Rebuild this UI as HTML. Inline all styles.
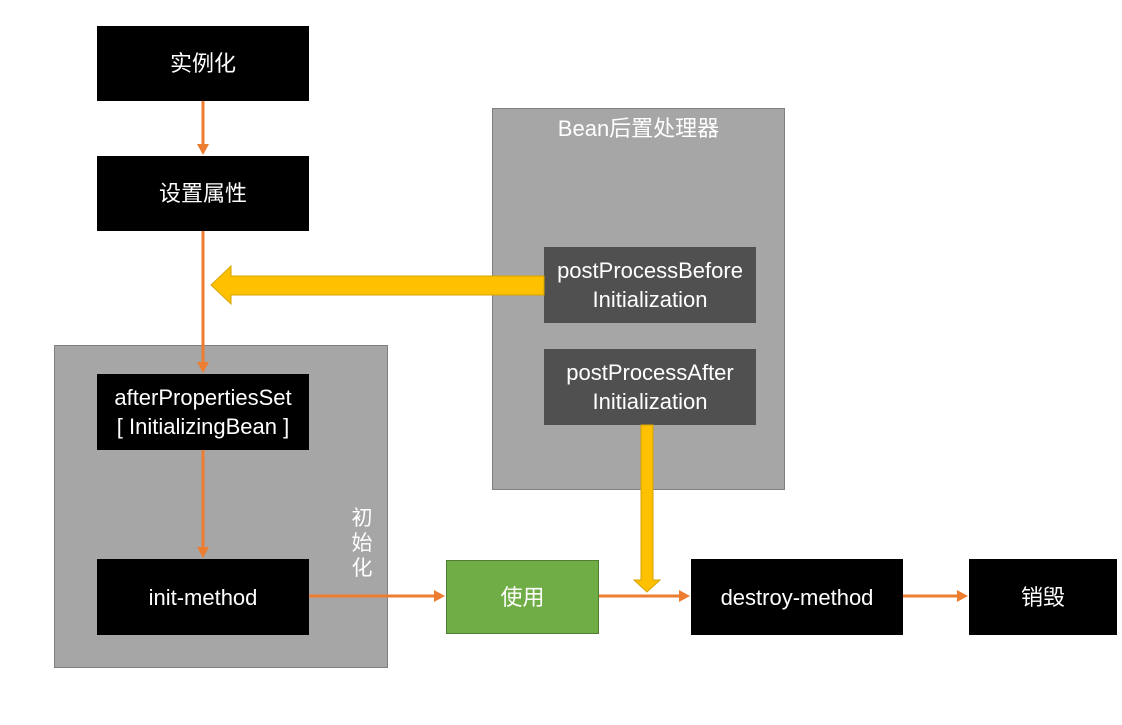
<!DOCTYPE html>
<html><head><meta charset="utf-8"><style>
body{margin:0;width:1122px;height:725px;background:#fff;position:relative;overflow:hidden;font-family:"Liberation Sans","Noto Sans CJK SC",sans-serif;}
.b{position:absolute;display:flex;align-items:center;justify-content:center;text-align:center;color:#fff;font-size:22px;line-height:29px;}
.k{background:#000}
.g{background:#a6a6a6;border:1px solid #7f7f7f;box-sizing:border-box}
.d{background:#505050}
</style></head><body>
<div class="b g" style="left:54px;top:345px;width:334px;height:323px"></div>
<div class="b g" style="left:492px;top:108px;width:293px;height:382px;align-items:flex-start;padding-top:5px">Bean后置处理器</div>
<div class="b k" style="left:97px;top:26px;width:212px;height:75px">实例化</div>
<div class="b k" style="left:97px;top:156px;width:212px;height:75px">设置属性</div>
<div class="b k" style="left:97px;top:374px;width:212px;height:76px">afterPropertiesSet<br>[ InitializingBean ]</div>
<div class="b k" style="left:97px;top:559px;width:212px;height:76px">init-method</div>
<div class="b d" style="left:544px;top:247px;width:212px;height:76px">postProcessBefore<br>Initialization</div>
<div class="b d" style="left:544px;top:349px;width:212px;height:76px">postProcessAfter<br>Initialization</div>
<div class="b" style="left:446px;top:560px;width:153px;height:74px;background:#70ad47;border:1px solid #507e32;box-sizing:border-box">使用</div>
<div class="b k" style="left:691px;top:559px;width:212px;height:76px">destroy-method</div>
<div class="b k" style="left:969px;top:559px;width:148px;height:76px">销毁</div>
<div class="b" style="left:348px;top:506px;width:28px;line-height:25px;font-size:21px">初<br>始<br>化</div>
<svg style="position:absolute;left:0;top:0" width="1122" height="725">
<g stroke="#ed7d31" stroke-width="3" fill="#ed7d31">
<line x1="203" y1="101" x2="203" y2="146"/><polygon points="197,144 209,144 203,155" stroke="none"/>
<line x1="203" y1="231" x2="203" y2="364"/><polygon points="197,362 209,362 203,373" stroke="none"/>
<line x1="203" y1="450" x2="203" y2="549"/><polygon points="197,547 209,547 203,558" stroke="none"/>
<line x1="309" y1="596" x2="436" y2="596"/><polygon points="434,590 434,602 445,596" stroke="none"/>
<line x1="599" y1="596" x2="681" y2="596"/><polygon points="679,590 679,602 690,596" stroke="none"/>
<line x1="903" y1="596" x2="959" y2="596"/><polygon points="957,590 957,602 968,596" stroke="none"/>
</g>
<polygon points="544,276 231,276 231,266 211,285 231,304 231,295 544,295" fill="#ffc000" stroke="#d6a300" stroke-width="1"/>
<polygon points="641,425 653,425 653,580 660,580 647,592 634,580 641,580" fill="#ffc000" stroke="#d6a300" stroke-width="1"/>
</svg>
</body></html>
